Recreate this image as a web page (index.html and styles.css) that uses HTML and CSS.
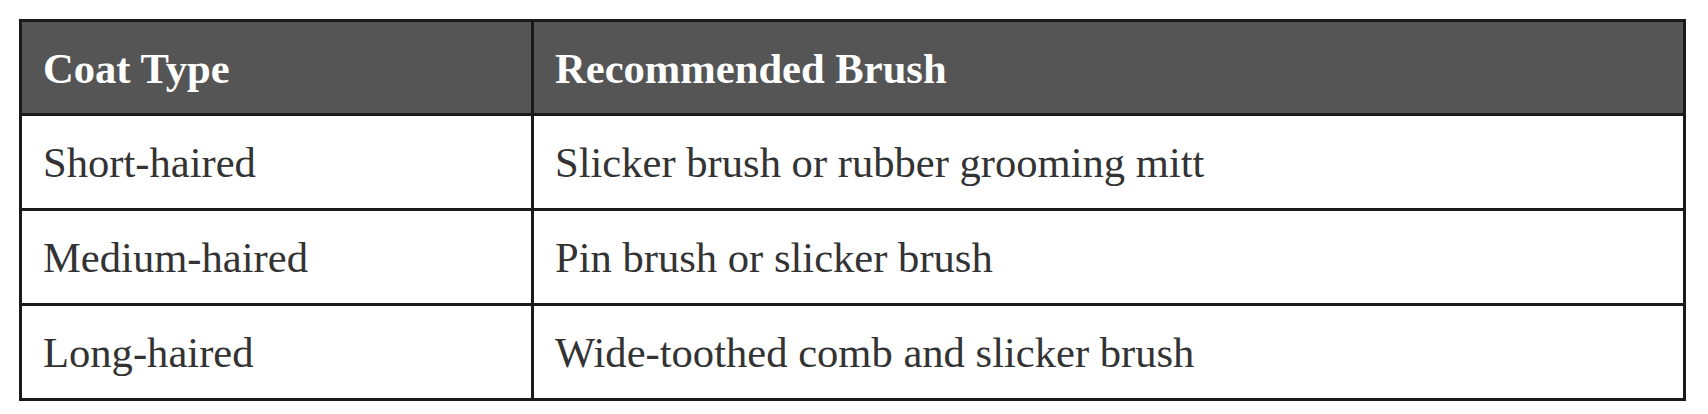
FILE: index.html
```html
<!DOCTYPE html>
<html lang="en">
<head>
<meta charset="utf-8">
<title>Coat Type Brushes</title>
<link rel="stylesheet" href="styles.css">
</head>
<body>
<table class="brush-table">
  <thead>
    <tr class="head-row">
      <th class="col-coat">Coat Type</th>
      <th class="col-brush">Recommended Brush</th>
    </tr>
  </thead>
  <tbody>
    <tr class="body-row">
      <td>Short-haired</td>
      <td>Slicker brush or rubber grooming mitt</td>
    </tr>
    <tr class="body-row">
      <td>Medium-haired</td>
      <td>Pin brush or slicker brush</td>
    </tr>
    <tr class="body-row">
      <td>Long-haired</td>
      <td>Wide-toothed comb and slicker brush</td>
    </tr>
  </tbody>
</table>
</body>
</html>
```

FILE: styles.css
```css
html, body {
  margin: 0;
  padding: 0;
  background: #ffffff;
}

body {
  padding: 19px 0 0 19px;
  font-family: "Liberation Serif", "Times New Roman", serif;
  font-size: 42.6px;
  color: #333333;
}

.brush-table {
  border-collapse: collapse;
  width: 1667px;
  table-layout: fixed;
}

.brush-table th,
.brush-table td {
  border: 3px solid #1a1a1a;
  padding: 0 21px;
  text-align: left;
  vertical-align: middle;
  line-height: 1.15;
}

.col-coat {
  width: 467px;
}

.head-row {
  height: 94px;
  background: #555555;
}

.head-row th {
  color: #ffffff;
  font-weight: bold;
  padding-top: 4px;
}

.body-row {
  height: 95px;
}

.body-row td {
  padding-top: 2px;
}
```
